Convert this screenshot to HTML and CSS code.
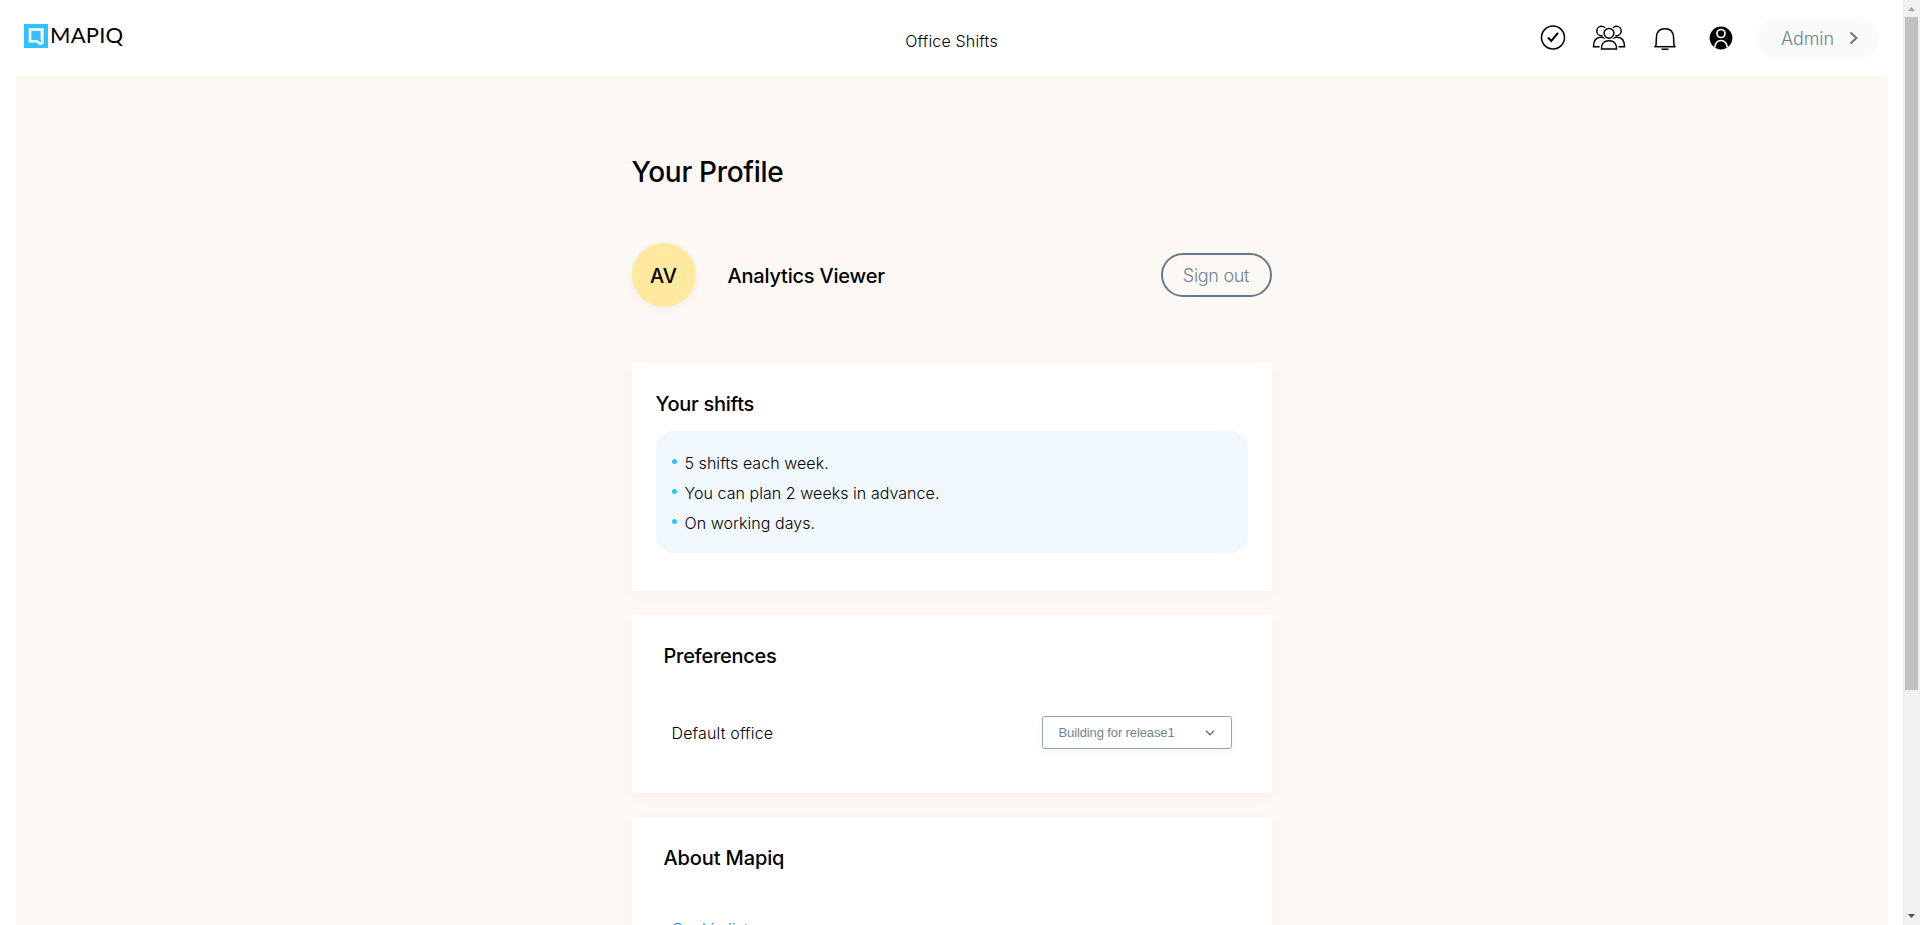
FILE: index.html
```html
<!DOCTYPE html>
<html lang="en">
<head>
<meta charset="utf-8">
<title>Mapiq</title>
<link rel="stylesheet" href="styles.css">
</head>
<body>
<div class="app">
  <div class="page">
    <header class="topbar">
      <a class="logo">
        <svg width="24" height="24" viewBox="0 0 24 24"><rect width="24" height="24" fill="#2fc2ff"/><path d="M6 5.500h12.300v13.200l-2 1.200-3.600-2.600H6z" fill="none" stroke="#fff" stroke-width="2.600"/><path d="M16.500 7v8.500" stroke="#8fdcff" stroke-width="1"/></svg>
        <span class="logo-text">MAPIQ</span>
      </a>
      <div class="topbar-title">Office Shifts</div>
      <nav class="actions">
        <svg class="icon" width="26" height="26" viewBox="0 0 26 26" fill="none" stroke="#000"><circle cx="13" cy="13.500" r="11.500" stroke-width="1.500"/><path d="M8 13.500l3.300 3.500L18 8.800" stroke-width="2"/></svg>
        <svg class="icon" width="34" height="26" viewBox="0 0 34 26" fill="#fff" stroke="#000" stroke-width="1.500"><circle cx="9.500" cy="7" r="4.700"/><circle cx="24.500" cy="7" r="4.700"/><path d="M1.500 22.800c0-6 2-9.500 7.500-9.500s6 2 7 9.500zM32.500 22.800c0-6-2-9.500-7.500-9.500s-6 2-7 9.500z"/><circle cx="17" cy="9.300" r="6.700" stroke="none"/><path d="M7.500 25.500v-2c0-6 4-9.500 9.500-9.500s9.500 3.500 9.500 9.500v2z" stroke="none"/><circle cx="17" cy="9.300" r="4.900"/><path d="M9.500 25c0-6 2-8.200 7.500-8.200s7.500 2.200 7.500 8.200z"/></svg>
        <svg class="icon" width="24" height="26" viewBox="0 0 24 26" fill="none" stroke="#000"><path d="M2.700 21.500c.7-2 .4-5.500.8-10C4 6 7 3.700 12 3.700s8 2.300 8.500 7.800c.4 4.500.1 8 .8 10" stroke-width="1.500"/><path d="M1.300 21.700h21.400" stroke-width="1.500"/><path d="M8.500 24.200h7" stroke-width="1.500"/></svg>
        <svg class="icon" width="24" height="26" viewBox="0 0 24 26"><circle cx="12" cy="13" r="11.400"/><g fill="none" stroke="#fff" stroke-width="1.700"><circle cx="12" cy="8.500" r="4"/><path d="M5.700 22.500c.6-4.600 2.900-7 6.300-7s5.700 2.400 6.300 7"/></g></svg>
        <a class="admin">Admin <svg width="10" height="14" viewBox="0 0 10 14" fill="none" stroke="#647582" stroke-width="2"><path d="M1.500 1.500L7.500 7l-6 5.500"/></svg></a>
      </nav>
    </header>
    <main class="content">
      <div class="column">
        <h1 class="heading">Your Profile</h1>
        <section class="user">
          <div class="avatar">AV</div>
          <div class="user-name">Analytics Viewer</div>
          <button class="sign-out">Sign out</button>
        </section>
        <section class="card shifts">
          <h2 class="card-title">Your shifts</h2>
          <ul class="rules">
            <li>5 shifts each week.</li>
            <li>You can plan 2 weeks in advance.</li>
            <li>On working days.</li>
          </ul>
        </section>
        <section class="card preferences">
          <h2 class="card-title">Preferences</h2>
          <div class="setting">
            <span class="setting-label">Default office</span>
            <div class="select"><span>Building for release1</span><svg width="10" height="6" viewBox="0 0 10 6" fill="none" stroke="#647582" stroke-width="1.500"><path d="M1 .8l4 3.900L9 .8"/></svg></div>
          </div>
        </section>
        <section class="card about">
          <h2 class="card-title about-title">About Mapiq</h2>
          <a class="link">Cookie list</a>
        </section>
      </div>
    </main>
  </div>
  <div class="scrollbar">
    <svg width="17" height="17" viewBox="0 0 17 17"><path d="M5 11l3.500-4 3.500 4z" fill="#a3a3a3"/></svg>
    <div class="thumb"></div>
    <svg width="17" height="17" viewBox="0 0 17 17"><path d="M5 6l3.500 4L12 6z" fill="#505050"/></svg>
  </div>
</div>
</body>
</html>
```
FILE: styles.css
```css
* { box-sizing: border-box; }
body { margin: 0; background: #fff; color: #000; font-family: Inter, "Liberation Sans", sans-serif; }
h1, h2, ul { margin: 0; padding: 0; font-weight: 500; }
svg { display: block; flex: none; }
.app { display: flex; height: 925px; overflow: hidden; }
.page { flex: 1; display: flex; flex-direction: column; padding: 0 16px; }
.topbar { display: grid; grid-template-columns: 1fr auto 1fr; height: 75px; flex: none; }
.logo { display: flex; align-items: center; gap: 2px; height: 24px; margin: 24px 0 0 8px; }
.logo-text { font-family: Lato, sans-serif; font-size: 22px; line-height: 24px; letter-spacing: 0.2px; padding-bottom: 2px; }
.topbar-title { font-size: 16px; font-weight: 300; line-height: 24px; margin-top: 29px; letter-spacing: 0.17px; }
.actions { display: flex; justify-content: flex-end; padding: 18px 8px 0 0; }
.icon { margin-top: 7px; }
.icon:nth-child(1) { margin: 6px 26px 0 0; }
.icon:nth-child(2) { margin: 6px 27px 0 0; }
.icon:nth-child(3) { margin-right: 32px; }
.icon:nth-child(4) { margin-right: 24px; }
.admin { display: flex; align-items: center; justify-content: space-between; width: 122px; height: 40px; padding: 0 20px 0 24px; border-radius: 20px; background: #fafafa; color: #6f818c; font-size: 18px; font-weight: 300; letter-spacing: -0.1px; }
.content { flex: 1; min-height: 0; background: #fcf9f4; overflow: hidden; }
.column { width: 640px; margin: 0 auto; padding-top: 75px; }
.heading { font-size: 28px; line-height: 44px; letter-spacing: -0.3px; white-space: nowrap; }
.user { display: flex; align-items: center; height: 64px; margin: 49px 0 56px; }
.avatar { width: 64px; height: 64px; border-radius: 50%; background: #ffe99f; display: flex; align-items: center; justify-content: center; font-size: 20px; font-weight: 500; box-shadow: 0 2px 8px rgba(0,0,0,.05); padding-top: 1px; }
.user-name { margin-left: 32px; padding-top: 1px; font-size: 20px; font-weight: 500; flex: 1; letter-spacing: -0.2px; }
.sign-out { width: 111px; height: 44px; border: 2px solid #657889; border-radius: 22px; background: transparent; color: #6f818c; font: 300 18px Inter, sans-serif; letter-spacing: -0.3px; padding: 1px 0 0; white-space: nowrap; }
.card { background: #fff; box-shadow: 0 4px 16px rgba(0,0,0,.035); margin-bottom: 24px; }
.card-title { font-size: 20px; line-height: 28px; letter-spacing: -0.27px; white-space: nowrap; }
.about-title { letter-spacing: -0.12px; }
.shifts { height: 228px; padding: 27px 24px 0; }
.rules { list-style: none; margin-top: 13px; height: 122px; padding: 17px 16px 0; border-radius: 16px; background: #f0f8fe; font-size: 16px; font-weight: 300; letter-spacing: 0.05px; }
.rules li { display: flex; align-items: center; height: 30px; white-space: nowrap; }
.rules li::before { content: ""; width: 5px; height: 5px; margin: -4px 8px 0 0; border-radius: 50%; background: #2fc2ff; }
.preferences { height: 178px; padding: 27px 40px 0 32px; }
.setting { display: flex; align-items: center; justify-content: space-between; height: 33px; margin-top: 46px; padding-left: 8px; }
.setting-label { font-size: 16px; font-weight: 300; letter-spacing: 0.15px; }
.select { display: flex; align-items: center; justify-content: space-between; width: 190px; height: 33px; padding: 0 16px; border: 1px solid #93a6b6; border-radius: 3px; box-shadow: 0 2px 6px rgba(0,0,0,.06); color: #74838d; font: 13px "Liberation Sans", sans-serif; letter-spacing: -0.12px; }
.about { height: 220px; padding: 27px 32px 0; }
.link { display: block; margin: 45px 0 0 8px; font-size: 16px; font-weight: 300; line-height: 24px; color: #0a87d6; }
.scrollbar { width: 17px; flex: none; background: #f0f0f0; display: flex; flex-direction: column; }
.thumb { height: 673px; width: 13px; margin: 0 auto 218px; background: #c1c1c1; }
```
